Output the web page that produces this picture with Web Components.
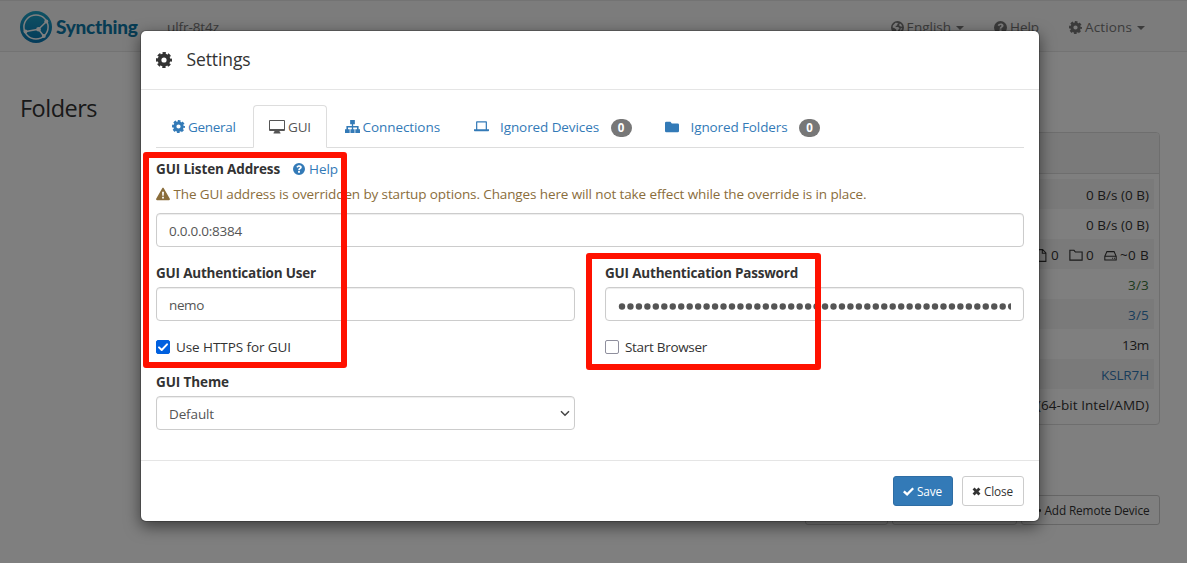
<!DOCTYPE html>
<html lang="en">
<head>
<meta charset="utf-8">
<title>Syncthing</title>
<style>
html,body{height:100%}
body{margin:0;overflow:hidden;background:#fff;color:#333;font:13.5px/20px "Open Sans","Noto Sans",sans-serif}
</style>
</head>
<body>
<syncthing-app></syncthing-app>
<script>
const element = (name, css, html) => customElements.define(name, class extends HTMLElement {
  connectedCallback() {
    if (this.shadowRoot) return;
    const root = this.attachShadow({ mode: 'open' });
    root.innerHTML = `<style>*{box-sizing:border-box}${css}</style>${typeof html === 'function' ? html(this) : html}`;
  }
});

const ICONS = {
  cog: '<circle cx="8" cy="8" r="4.5" fill="none" stroke="currentColor" stroke-width="3.8"/><circle cx="8" cy="8" r="6.7" fill="none" stroke="currentColor" stroke-width="2.6" stroke-dasharray="3.2 2.062" stroke-dashoffset="1.6"/>',
  desktop: '<path fill-rule="evenodd" d="M1 1h14a1 1 0 0 1 1 1v9a1 1 0 0 1-1 1h-4.500l.5 1.500h.5V14.500h-7V13.500H5l.5-1.500H1a1 1 0 0 1-1-1V2a1 1 0 0 1 1-1zm0 1v8h14V2z"/>',
  sitemap: '<path d="M5.500 1h5v4.500H8.700v2h5.800V11H16v4h-5v-4h1.800V9H8.700v2h1.500v4H5.800v-4h1.500V9H3.200v2H5v4H0v-4h1.500V7.500h5.800v-2H5.500z"/>',
  laptop: '<path fill-rule="evenodd" d="M3 2.500h10a.8.8 0 0 1 .8.8V11h2.200v1.300a.7.7 0 0 1-.7.700H.7a.7.700 0 0 1-.7-.7V11h2.200V3.300A.8.800 0 0 1 3 2.500zm.5 1.200V11h9V3.700z"/>',
  folder: '<path d="M1.500 2h4.700l1.600 2H14.500A1.500 1.500 0 0 1 16 5.500V12.500A1.500 1.500 0 0 1 14.500 14h-13A1.500 1.500 0 0 1 0 12.500V3.500A1.500 1.500 0 0 1 1.500 2z"/>',
  folderOpen: '<path fill="none" stroke="currentColor" stroke-width="1.300" d="M1 2.600h4.700l1.600 2H15v9.200H1z"/>',
  file: '<path fill="none" stroke="currentColor" stroke-width="1.300" d="M2.600.8h6.800l4 4v10.400H2.600zM9 1v4.200h4.400"/>',
  disk: '<path fill="none" stroke="currentColor" stroke-width="1.300" d="M1 9l2.600-5.800h8.800L15 9v4.500H1zM1 9h14M10 11.300h1.200M12.300 11.300h1.200"/>',
  help: '<path fill-rule="evenodd" d="M8 0a8 8 0 1 1 0 16A8 8 0 0 1 8 0zM4.500 5.300l1.900 1.100C6.900 5.500 7.400 5 8.100 5c1.300 0 1.400 1.200.5 1.800C7.400 7.500 7 8.100 7 9.500h2.200c0-.8.3-1 1.100-1.500C12.800 6.400 12 3 8.300 3 6.500 3 5.300 3.900 4.500 5.300zM6.700 10.500v2.400h2.600v-2.400z"/>',
  globe: '<path fill-rule="evenodd" d="M8 0a8 8 0 1 1 0 16A8 8 0 0 1 8 0zM5.500 2.300L2.300 5.500 2 8l2.500 1 2 1.500v3L8 14l.5-3 2-1.500L9 7.500H6L5.500 6l2-.5.5-2 1.500-1zM11 3l-1 2 1 1.500 2.800.5C13.500 5 12.500 3.800 11 3zM12 9l-1 3.500c1.500-.8 2.500-2.300 2.800-3.500z"/>',
  warn: '<path fill-rule="evenodd" d="M8.900 1.500l6.900 12c.4.700 0 1.500-.9 1.500H1.100c-.9 0-1.300-.8-.9-1.500l6.900-12c.4-.7 1.400-.7 1.800 0zM6.900 5.500l.3 4.500h1.600l.3-4.500zM7 11v2h2v-2z"/>',
  check: '<path d="M0 9l2.400-2.500L6 9.700 13.600 2 16 4.400 6 14.500z"/>',
  times: '<path d="M1 4.500l3.500-3.500L8 4.500 11.500 1 15 4.500 11.500 8l3.500 3.500-3.500 3.500L8 11.500 4.500 15 1 11.500 4.500 8z"/>',
  plus: '<path d="M6.300 1.500h3.400v4.800h4.800v3.400H9.700v4.800H6.300V9.700H1.500V6.300h4.800z"/>'
};
element('st-icon', ':host{display:inline-block;flex:none}svg{display:block}',
  h => { const s = h.getAttribute('s') || 13; return `<svg width="${s}" height="${s}" viewBox="0 0 16 16" fill="currentColor">${ICONS[h.getAttribute('name')]}</svg>`; });

element('st-logo', ':host{display:flex;align-items:center;gap:4px}svg{display:block}b{font:900 19px/24px Lato,sans-serif;color:#0f78a8}',
  `<svg width="32" height="32" viewBox="0 0 32 32"><defs><linearGradient id="g" x2="0" y2="1"><stop stop-color="#1fa5c8"/><stop offset="1" stop-color="#0877b4"/></linearGradient></defs>
  <circle cx="16" cy="16" r="16" fill="url(#g)"/><circle cx="16" cy="16" r="12.100" fill="none" stroke="#fff" stroke-width="1.500"/>
  <path d="M18.500 18.300L27.500 9.500M18.500 18.300L24 25.500M18.500 18.300L4.500 20.800" stroke="#fff" stroke-width="1.500"/><g fill="#fff"><circle cx="18.500" cy="18.300" r="2.300"/><circle cx="26.300" cy="10.500" r="2"/><circle cx="23.800" cy="25" r="2"/><circle cx="5.500" cy="20.600" r="2"/></g></svg><b><fit-text w="81.500">Syncthing</fit-text></b>`);

element('nav-item', ':host{display:flex;align-items:center;color:#777}st-icon{margin-right:3px}i{border:4px solid transparent;border-top-color:currentColor;border-bottom:0;margin:1px 0 0 5px}',
  h => `<st-icon name="${h.getAttribute('icon')}"></st-icon><slot></slot>${h.hasAttribute('caret') ? '<i></i>' : ''}`);

element('nav-bar', ':host{display:flex;align-items:center;box-sizing:border-box;height:52px;padding:2px 42px 0 20px;background:#f8f8f8;border:solid #e7e7e7;border-width:1px 0}.dev{margin-left:29.5px;color:#777}.r{margin-left:auto;display:flex;gap:30px}',
  `<st-logo></st-logo><fit-text class="dev" w="52">ulfr-8t4z</fit-text><div class="r"><nav-item icon="globe" caret><fit-text w="44.500">English</fit-text></nav-item><nav-item icon="help"><fit-text w="29">Help</fit-text></nav-item><nav-item icon="cog" caret><fit-text w="47">Actions</fit-text></nav-item></div>`);

element('info-row', ':host{display:flex;align-items:center;justify-content:flex-end;height:30px;padding:2px 5px 0;box-sizing:border-box}:host([odd]){background:#f5f5f5}', '<slot></slot>');

element('device-panel', ':host{display:block;box-sizing:border-box;height:293px;border:1px solid #ddd;border-radius:4px;overflow:hidden}header{height:41px;background:#f5f5f5;border-bottom:1px solid #ddd}main{padding:5px}st-icon{margin-right:3px}.n{margin-right:10px}',
  `<header></header><main><info-row odd><fit-text w="63">0 B/s (0 B)</fit-text></info-row><info-row><fit-text w="63">0 B/s (0 B)</fit-text></info-row>
  <info-row odd><st-icon name="file"></st-icon><fit-text class="n" w="8">0</fit-text><st-icon name="folderOpen" s="14"></st-icon><fit-text class="n" w="8">0</fit-text><st-icon name="disk"></st-icon><fit-text w="29">~0 B</fit-text></info-row>
  <info-row style="color:#3c763d"><fit-text w="21">3/3</fit-text></info-row><info-row odd style="color:#337ab7"><fit-text w="21">3/5</fit-text></info-row><info-row><fit-text w="27">13m</fit-text></info-row><info-row odd style="color:#337ab7"><fit-text w="48">KSLR7H</fit-text></info-row><info-row><fit-text w="112">(64-bit Intel/AMD)</fit-text></info-row></main>`);

element('st-button', ':host{display:flex;align-items:center;justify-content:center;gap:3px;box-sizing:border-box;height:30px;border:1px solid #ccc;border-radius:3px;background:#fff;font-size:11.8px;color:#333;padding:0 1px 1px 0}:host([primary]){background:#337ab7;border-color:#2e6da4;color:#fff}st-icon,::slotted(st-icon){margin-top:2px}', '<slot></slot>');

element('main-page', `:host{display:block;height:100%}.c{display:grid;grid-template-columns:1fr 550px;padding:43px 27px 0 20px}h3{margin:0;font:400 23.500px/26px "Open Sans",sans-serif}.p{padding-top:37px}.b{display:flex;gap:4px;justify-content:flex-end;margin-top:70px}`,
  `<nav-bar></nav-bar><div class="c"><h3><fit-text w="77">Folders</fit-text></h3><div class="p"><device-panel></device-panel><div class="b"><st-button style="width:83px"></st-button><st-button style="width:125px"></st-button><st-button style="width:139px"><st-icon name="plus" s="11"></st-icon><fit-text w="105">Add Remote Device</fit-text></st-button></div></div></div>`);

element('st-tab', ':host{display:flex;align-items:center;box-sizing:border-box;height:43px;padding:0 14.5px 0 15px;margin-right:2px;border:1px solid transparent;color:#337ab7}:host([active]){color:#555;border-color:#ddd;border-bottom-color:#fff;border-radius:4px 4px 0 0}st-icon{margin-right:var(--gap,3px)}b{margin:2px 0 0 11.5px;width:21px;height:18px;border-radius:9px;background:#777;color:#fff;font-size:11.5px;line-height:18px;text-align:center}',
  h => `<st-icon name="${h.getAttribute('icon')}" s="${h.getAttribute('s')}"></st-icon><slot></slot>${h.hasAttribute('n') ? `<b>${h.getAttribute('n')}</b>` : ''}`);

element('st-field', ':host{display:block}label{display:flex;height:20px;font-weight:700;margin-bottom:4px}.box{display:flex;align-items:center;height:34px;padding:2px 12px 0;border:1px solid #ccc;border-radius:4px;box-shadow:inset 0 1px 1px rgba(0,0,0,.075);color:#555}',
  `<label><slot name="label"></slot></label><div class="box"><slot></slot></div>`);

element('st-dots', ':host{display:block;flex:1;height:7px;margin-top:2px;overflow:hidden}svg{display:block}',
  () => `<svg width="393" height="7">${Array.from({ length: 47 }, (_, i) => `<circle cx="${4 + i * 8.460}" cy="3.500" r="3.200" fill="#555"/>`).join('')}</svg>`);

element('st-check', ':host{display:flex;align-items:center;height:20px}i{width:14px;height:14px;border:1px solid #8f8f9d;border-radius:2px;margin-right:6px;background:#fff}:host([checked]) i{background:#0060df;border-color:#0060df}svg{display:none}:host([checked]) svg{display:block}',
  `<i><svg width="12" height="12"><path d="M2 6.300l2.700 2.700L10 3.300" fill="none" stroke="#fff" stroke-width="1.900" stroke-linecap="round" stroke-linejoin="round"/></svg></i><slot></slot>`);

element('settings-modal', `:host{display:block;width:900px;height:492px;box-sizing:border-box;background:#fff;background-clip:padding-box;border:1px solid rgba(0,0,0,.2);border-radius:6px;box-shadow:0 5px 15px rgba(0,0,0,.5)}
header{display:flex;align-items:center;height:59px;padding:0 15px;border-bottom:1px solid #e5e5e5;font-size:17.500px}header st-icon{margin-right:14.500px}header fit-text{margin-top:-2px}
main{height:370px;padding:15px 15px 0}nav{display:flex;height:43px;border-bottom:1px solid #ddd;margin-bottom:11px}
.head{display:flex;align-items:center;height:20px}.head b{margin-right:13px;display:flex}.help{display:flex;align-items:center;gap:4px;color:#337ab7}
.warn{display:flex;align-items:center;gap:3.500px;height:20px;margin:5px 0 9px;color:#8a6d3b}.box{display:flex;align-items:center;height:34px;padding:2px 12px 0;border:1px solid #ccc;border-radius:4px;box-shadow:inset 0 1px 1px rgba(0,0,0,.075);color:#555}
.grid{display:grid;grid-template-columns:419px 419px;column-gap:30px;row-gap:16px;margin-top:16px}.theme{margin-top:-1px}.arrow{margin:-1px -8px 0 auto}
footer{display:flex;justify-content:flex-end;gap:9px;height:61px;padding:15px;border-top:1px solid #e5e5e5}`,
  `<header><st-icon name="cog" s="16"></st-icon><fit-text w="64">Settings</fit-text></header>
<main><nav><st-tab icon="cog" s="13"><fit-text w="47.500">General</fit-text></st-tab><st-tab icon="desktop" s="16" active><fit-text w="23">GUI</fit-text></st-tab><st-tab icon="sitemap" s="15"><fit-text w="77.500">Connections</fit-text></st-tab><st-tab icon="laptop" s="15" n="0" style="--gap:11.500px"><fit-text w="99">Ignored Devices</fit-text></st-tab><st-tab icon="folder" s="14" n="0" style="--gap:11.500px"><fit-text w="97">Ignored Folders</fit-text></st-tab></nav>
<div class="head"><b><fit-text w="124">GUI Listen Address</fit-text></b><span class="help"><st-icon name="help" s="12"></st-icon><fit-text w="29">Help</fit-text></span></div>
<div class="warn"><st-icon name="warn" s="14"></st-icon><fit-text w="693">The GUI address is overridden by startup options. Changes here will not take effect while the override is in place.</fit-text></div>
<div class="box"><fit-text w="73">0.0.0.0:8384</fit-text></div>
<div class="grid"><st-field><fit-text slot="label" w="160">GUI Authentication User</fit-text><fit-text w="35">nemo</fit-text></st-field><st-field><fit-text slot="label" w="193">GUI Authentication Password</fit-text><st-dots></st-dots></st-field>
<st-check checked><fit-text w="115">Use HTTPS for GUI</fit-text></st-check><st-check><fit-text w="82">Start Browser</fit-text></st-check>
<st-field class="theme"><fit-text slot="label" w="73">GUI Theme</fit-text><fit-text w="45">Default</fit-text><svg class="arrow" width="10" height="7"><path d="M1 1.200l4 4 4-4" fill="none" stroke="#444" stroke-width="1.500"/></svg></st-field></div></main>
<footer><st-button primary style="width:60px"><st-icon name="check" s="11"></st-icon><fit-text w="25">Save</fit-text></st-button><st-button style="width:62px"><st-icon name="times" s="9"></st-icon><fit-text w="29">Close</fit-text></st-button></footer>`);

element('syncthing-app', `:host{display:block;position:relative;width:1187px;height:563px;overflow:hidden}.shade{position:absolute;inset:0;background:rgba(0,0,0,.5)}settings-modal{position:absolute;left:140px;top:30px}.mark{position:absolute;border:6px solid #ff1100;border-radius:3px}`,
  `<main-page></main-page><div class="shade"></div><settings-modal></settings-modal><div class="mark" style="left:143px;top:152px;width:204px;height:216px"></div><div class="mark" style="left:586px;top:253px;width:235px;height:117px"></div>`);

/* Text whose tracking is adjusted so that it fills the width given in "w". */
customElements.define('fit-text', class extends HTMLElement {
  connectedCallback() {
    if (this.shadowRoot) return;
    const w = +this.getAttribute('w');
    const root = this.attachShadow({ mode: 'open' });
    root.innerHTML = `<style>:host{display:inline-block;width:${w}px;white-space:nowrap;flex:none}</style><span><slot></slot></span>`;
    const span = root.querySelector('span');
    const n = this.textContent.length;
    span.style.letterSpacing = (w - span.getBoundingClientRect().width) / n + 'px';
  }
});
</script>
</body>
</html>
